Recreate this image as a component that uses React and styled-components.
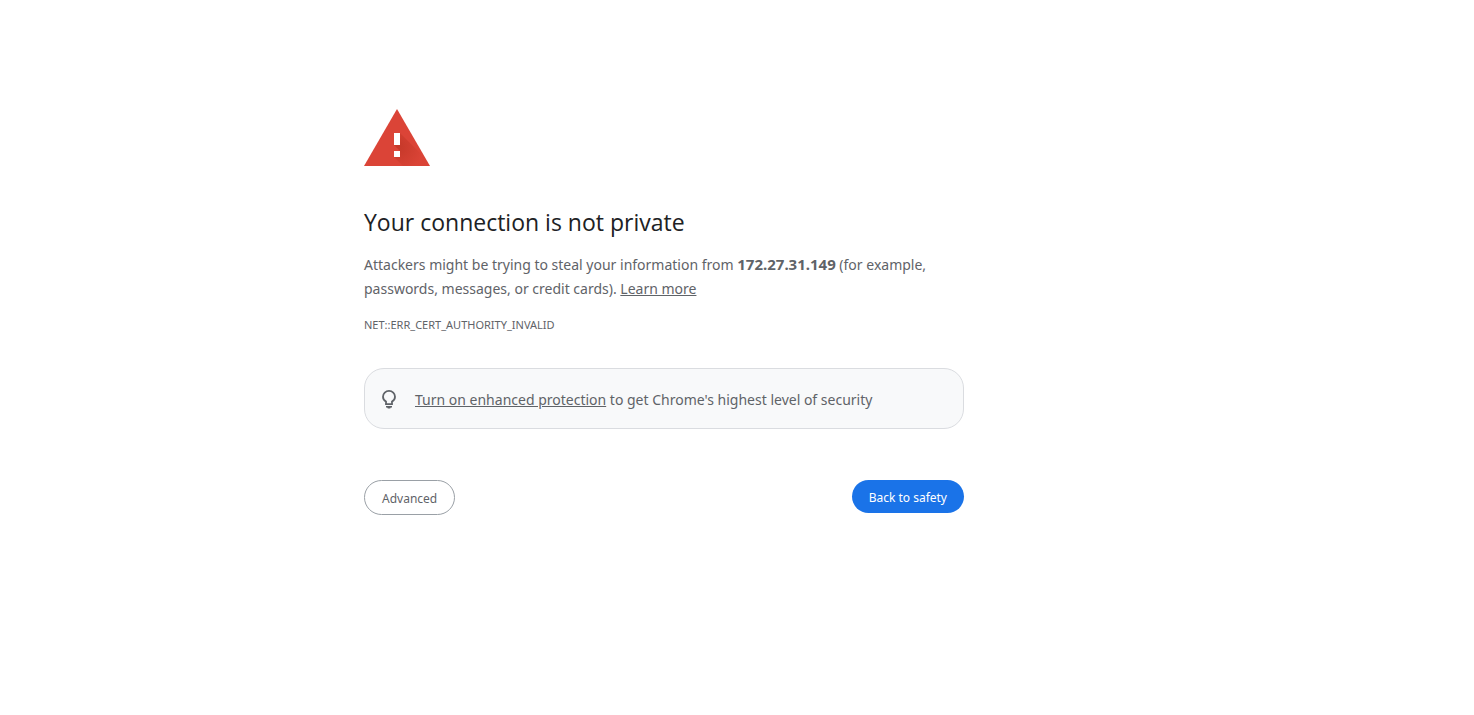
import React from "react"
import styled, { createGlobalStyle } from "styled-components"

const App = () => {
  return (
    <>
      <GlobalStyle />
      <Page>
        <Content>
          <WarningIcon />
          <Title>Your connection is not private</Title>
          <Message>
            Attackers might be trying to steal your information from{" "}
            <Host>172.27.31.149</Host> (for example, passwords, messages, or
            credit cards). <TextLink href="#learn-more">Learn more</TextLink>
          </Message>
          <ErrorCode>NET::ERR_CERT_AUTHORITY_INVALID</ErrorCode>
          <Promo>
            <BulbIcon />
            <p>
              <TextLink href="#enhanced">Turn on enhanced protection</TextLink>{" "}
              to get Chrome's highest level of security
            </p>
          </Promo>
          <Actions>
            <OutlineButton type="button">Advanced</OutlineButton>
            <PrimaryButton type="button">Back to safety</PrimaryButton>
          </Actions>
        </Content>
      </Page>
    </>
  )
}

const WarningIcon = () => (
  <WarningSvg viewBox="0 0 66 57" aria-hidden="true">
    <defs>
      <radialGradient id="shade" cx="34" cy="38" r="25" gradientUnits="userSpaceOnUse">
        <stop offset="0" stopColor="#a52714" stopOpacity="0.4" />
        <stop offset="1" stopColor="#a52714" stopOpacity="0.02" />
      </radialGradient>
    </defs>
    <path d="M0 57h66L33 0z" fill="#db4437" />
    <path d="M36 24l26 26 4 7H39l-9-9 6-6-6-6z" fill="url(#shade)" />
    <path d="M30 24h6v12h-6zM30 42h6v6h-6z" fill="#fff" />
  </WarningSvg>
)

const BulbIcon = () => (
  <BulbSvg viewBox="0 0 24 24" aria-hidden="true">
    <path
      d="M9 16.200v-2.600C7.100 12.500 6 10.900 6 8.700a6 5.900 0 0 1 12 0c0 2.200-1.100 3.800-3 4.900v2.600z"
      fill="none"
      stroke="#5f6368"
      strokeWidth="1.800"
    />
    <path d="M9 18h6v1.500h-1.200l-.6.900h-2.400l-.6-.9H9z" fill="#5f6368" />
  </BulbSvg>
)

const GlobalStyle = createGlobalStyle`
  body {
    margin: 0;
    background: #fff;
    color: #5f6368;
    font-family: "Noto Sans", "Open Sans", sans-serif;
    font-size: 14px;
    line-height: 24px;
  }

  h1,
  p {
    margin: 0;
  }
`

const Page = styled.main`
  padding: 109px 0 48px;

  @media (min-width: 900px) {
    padding-right: 146px;
  }
`

const Content = styled.div`
  max-width: 600px;
  margin: 0 auto;
`

const WarningSvg = styled.svg`
  display: block;
  width: 66px;
  height: 57px;
  margin-bottom: 42px;
`

const BulbSvg = styled.svg`
  flex: none;
  width: 24px;
  height: 24px;
`

const Title = styled.h1`
  margin-bottom: 17px;
  color: #202124;
  font-family: "Open Sans", "Noto Sans", sans-serif;
  font-size: 23px;
  font-weight: 400;
  line-height: 28px;
`

const Message = styled.p`
  max-width: 580px;
`

const Host = styled.strong`
  font-size: 15px;
  line-height: 20px;
`

const TextLink = styled.a`
  color: inherit;
  text-decoration: underline;
`

const ErrorCode = styled.p`
  margin-top: 12px;
  font-size: 11px;
`

const Promo = styled.div`
  display: flex;
  align-items: center;
  gap: 14px;
  margin-top: 31px;
  padding: 19px 12px 16px;
  border: 1px solid #dadce0;
  border-radius: 20px;
  background: #f8f9fa;
`

const Actions = styled.div`
  display: flex;
  align-items: flex-start;
  justify-content: space-between;
  margin-top: 51px;
`

const Button = styled.button`
  padding: 9px 17px 7px;
  border: 0;
  border-radius: 20px;
  font: inherit;
  font-size: 12px;
  line-height: 17px;
  cursor: pointer;
`

const OutlineButton = styled(Button)`
  border: 1px solid #9aa0a6;
  background: #fff;
  color: #5f6368;
`

const PrimaryButton = styled(Button)`
  background: #1a73e8;
  color: #fff;
`

export default App
